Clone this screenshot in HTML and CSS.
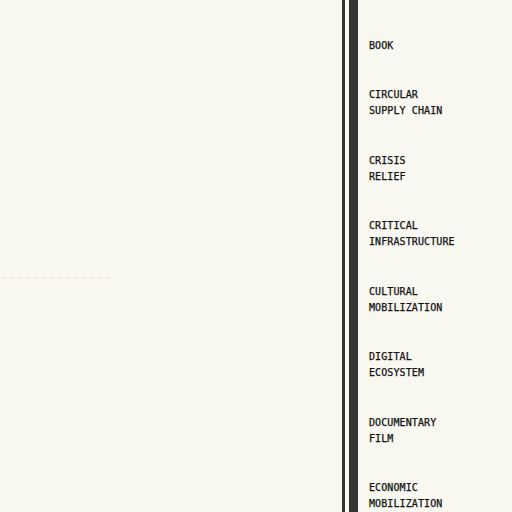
FILE: index.html
```html
<!DOCTYPE html>
<html lang="en">
<head>
<meta charset="utf-8">
<title>Index</title>
<link rel="stylesheet" href="styles.css">
</head>
<body>
<div class="page">
  <main class="canvas">
    <div class="rule"></div>
  </main>
  <aside class="side">
    <div class="rail-thin"></div>
    <div class="rail-thick"></div>
    <ul class="topics">
      <li>BOOK</li>
      <li>CIRCULAR<br>SUPPLY CHAIN</li>
      <li>CRISIS<br>RELIEF</li>
      <li>CRITICAL<br>INFRASTRUCTURE</li>
      <li>CULTURAL<br>MOBILIZATION</li>
      <li>DIGITAL<br>ECOSYSTEM</li>
      <li>DOCUMENTARY<br>FILM</li>
      <li>ECONOMIC<br>MOBILIZATION</li>
    </ul>
  </aside>
</div>
</body>
</html>
```
FILE: styles.css
```css
html, body {
  margin: 0;
  padding: 0;
  background: #f8f7f0;
  height: 100%;
  overflow: hidden;
}
.page {
  display: flex;
  height: 512px;
}
.canvas {
  width: 342px;
  flex: none;
}
.rule {
  margin: 277px 0 0 2px;
  width: 110px;
  height: 1px;
  background: repeating-linear-gradient(to right, #eedcd3 0 5px, transparent 5px 8px);
}
.side {
  display: flex;
  flex: 1;
  height: 512px;
}
.rail-thin {
  width: 3px;
  background: #333333;
  flex: none;
}
.rail-thick {
  width: 9px;
  margin-left: 4px;
  background: #333333;
  flex: none;
}
.topics {
  list-style: none;
  margin: 0;
  padding: 21px 0 0 11px;
  font-family: "DejaVu Sans Mono", monospace;
  font-size: 10px;
  letter-spacing: 0.1px;
  line-height: 16px;
  color: #111111;
  -webkit-text-stroke: 0.25px #111111;
}
.topics li {
  padding: 16.75px 0;
  white-space: nowrap;
}
```
